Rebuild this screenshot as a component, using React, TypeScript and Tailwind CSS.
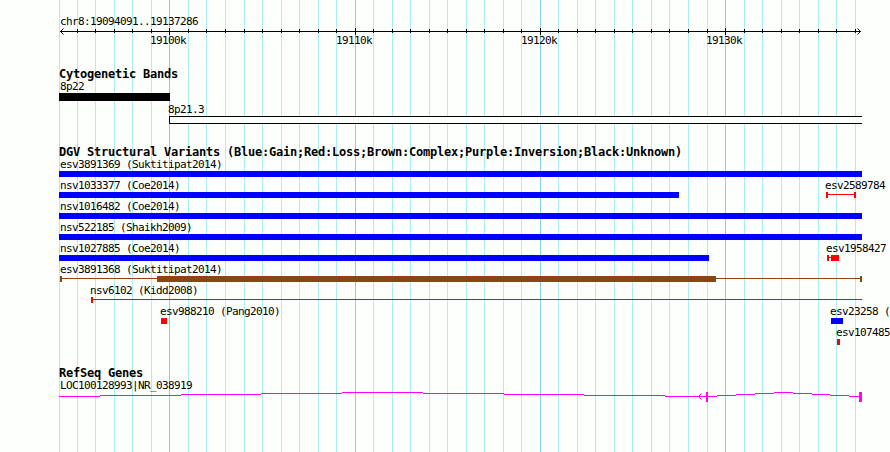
import type { ReactNode } from 'react';

const LEFT = 59;
const RIGHT = 862;

const gridLines = [
  59, 77, 95, 114, 132, 151, 169, 188, 206, 225, 244, 262, 281, 299, 318, 336, 355, 373, 392, 410, 429, 447,
  466, 484, 503, 521, 540, 558, 577, 595, 614, 632, 651, 669, 688, 707, 725, 744, 762, 781, 799, 818, 836, 855,
];

const majorTicks = [
  { x: 169, label: '19100k' },
  { x: 355, label: '19110k' },
  { x: 540, label: '19120k' },
  { x: 725, label: '19130k' },
];

const isMajor = (x: number) => majorTicks.some(t => t.x === x);

type Segment = { start: number; end: number; kind: 'box' | 'line' };
type Feature = { name: string; labelX: number; color: string; segments: Segment[] };

const box = (start: number, end: number): Segment => ({ start, end, kind: 'box' });
const line = (start: number, end: number): Segment => ({ start, end, kind: 'line' });

const BLUE = '#0000ff';
const RED = '#ff0000';
const BROWN = '#8b4513';

const variantRows: Feature[][] = [
  [{ name: 'esv3891369 (Suktitipat2014)', labelX: 60, color: BLUE, segments: [box(LEFT, RIGHT)] }],
  [
    { name: 'nsv1033377 (Coe2014)', labelX: 60, color: BLUE, segments: [box(LEFT, 679)] },
    { name: 'esv2589784', labelX: 825, color: RED, segments: [box(826, 828), line(828, 854), box(854, 856)] },
  ],
  [{ name: 'nsv1016482 (Coe2014)', labelX: 60, color: BLUE, segments: [box(LEFT, RIGHT)] }],
  [{ name: 'nsv522185 (Shaikh2009)', labelX: 60, color: BLUE, segments: [box(LEFT, RIGHT)] }],
  [
    { name: 'nsv1027885 (Coe2014)', labelX: 60, color: BLUE, segments: [box(LEFT, 709)] },
    { name: 'esv1958427', labelX: 826, color: RED, segments: [box(827, 829), line(829, 831), box(831, 839)] },
  ],
  [
    {
      name: 'esv3891368 (Suktitipat2014)',
      labelX: 60,
      color: BROWN,
      segments: [box(60, 62), line(62, 157), box(157, 716), line(716, 860), box(860, RIGHT)],
    },
  ],
  [{ name: 'nsv6102 (Kidd2008)', labelX: 90, color: RED, segments: [box(91, 93), line(93, RIGHT)] }],
  [
    { name: 'esv988210 (Pang2010)', labelX: 160, color: RED, segments: [box(161, 167)] },
    { name: 'esv23258 (', labelX: 830, color: BLUE, segments: [box(831, 843)] },
  ],
  [{ name: 'esv107485', labelX: 836, color: RED, segments: [box(837, 840)] }],
];

// stepped intron lines: [start, end, y]
const intronSteps = [
  [59, 100, 4], [100, 181, 3], [181, 261, 2], [261, 342, 1], [342, 423, 0], [423, 504, 1], [504, 584, 2],
  [584, 665, 3], [665, 717, 4], [717, 736, 3], [736, 755, 2], [755, 774, 1], [774, 793, 0], [793, 812, 1],
  [812, 830, 2], [830, 849, 3], [849, 859, 4],
];

function Track({ title, children }: { title: string; children: ReactNode }) {
  return (
    <section className="flex flex-col">
      <h2 className="text-[12px] leading-3 font-bold tracking-[-0.224px] whitespace-pre">{title}</h2>
      <div className="flex flex-col gap-0.5">{children}</div>
    </section>
  );
}

function Grid() {
  return (
    <svg className="absolute inset-0" width="890" height="452" shapeRendering="crispEdges">
      {gridLines.map(x => (
        <rect key={x} x={x} y="0" width="1" height="452" fill={isMajor(x) ? '#87ceeb' : '#afeeee'} />
      ))}
    </svg>
  );
}

function Ruler() {
  return (
    <header className="flex flex-col">
      <p className="h-[13px] pl-px">chr8:19094091..19137286</p>
      {/* axis and its tick labels share one scale */}
      <svg width="831" height="18" viewBox="59 0 831 18">
        <g shapeRendering="crispEdges">
          <rect x="60" y="3" width="801" height="1" />
          {gridLines.slice(1).map(x => (
            <rect key={x} x={x} y={isMajor(x) ? 0 : 1} width="1" height={isMajor(x) ? 7 : 4} />
          ))}
        </g>
        <path d="M63.5 0.5 L60.5 3.5 L63.5 6.5 M857.5 0.5 L860.5 3.5 L857.5 6.5" fill="none" stroke="black" />
        {majorTicks.map(t => (
          <text key={t.x} x={t.x - 19} y="16">{t.label}</text>
        ))}
      </svg>
    </header>
  );
}

function CytoBands() {
  return (
    <Track title="Cytogenetic Bands">
      <div className="flex flex-col gap-px">
        <span className="h-3 pl-px">8p22</span>
        <div className="h-2 w-[111px] bg-black" />
      </div>
      <div className="flex flex-col gap-px pl-[110px]">
        <span className="-ml-px h-3">8p21.3</span>
        <div className="h-2 w-[693px] border-y border-l border-black bg-[#fdfffc]" />
      </div>
    </Track>
  );
}

function VariantRow({ features }: { features: Feature[] }) {
  return (
    <svg width="831" height="19" viewBox="59 0 831 19">
      {features.map(f => (
        <g key={f.name}>
          <text x={f.labelX} y="10">{f.name}</text>
          {f.segments.map(s => (
            <rect
              key={s.start}
              x={s.start}
              y={s.kind === 'box' ? 13 : 15}
              width={s.end - s.start}
              height={s.kind === 'box' ? 6 : 1}
              fill={f.color}
              shapeRendering="crispEdges"
            />
          ))}
        </g>
      ))}
    </svg>
  );
}

function Genes() {
  return (
    <Track title="RefSeq Genes">
      <div className="flex flex-col gap-px">
        <span className="h-3 pl-px">LOC100128993|NR_038919</span>
        <svg width="831" height="10" viewBox="59 0 831 10" fill="#ff00ff">
          <g shapeRendering="crispEdges">
            {intronSteps.map(([start, end, y]) => (
              <rect key={start} x={start} y={y} width={end - start} height="1" />
            ))}
            <rect x="706" y="0" width="2" height="10" />
            <rect x="859" y="0" width="3" height="10" />
          </g>
          <path d="M701.5 1.5 L698.5 4.5 L701.5 7.5" fill="none" stroke="#ff00ff" />
        </svg>
      </div>
    </Track>
  );
}

export default function App() {
  return (
    <div className="relative h-[452px] w-[890px] overflow-hidden bg-[#fdfffc] font-['DejaVu_Sans_Mono','Liberation_Mono',monospace] text-[11px] leading-[14px] tracking-[-0.622px] text-black">
      <Grid />
      <main className="relative flex flex-col gap-[22px] pt-[15px] pl-[59px]">
        <Ruler />
        <CytoBands />
        <Track title="DGV Structural Variants (Blue:Gain;Red:Loss;Brown:Complex;Purple:Inversion;Black:Unknown)">
          {variantRows.map(row => (
            <VariantRow key={row[0].name} features={row} />
          ))}
        </Track>
        <Genes />
      </main>
    </div>
  );
}
